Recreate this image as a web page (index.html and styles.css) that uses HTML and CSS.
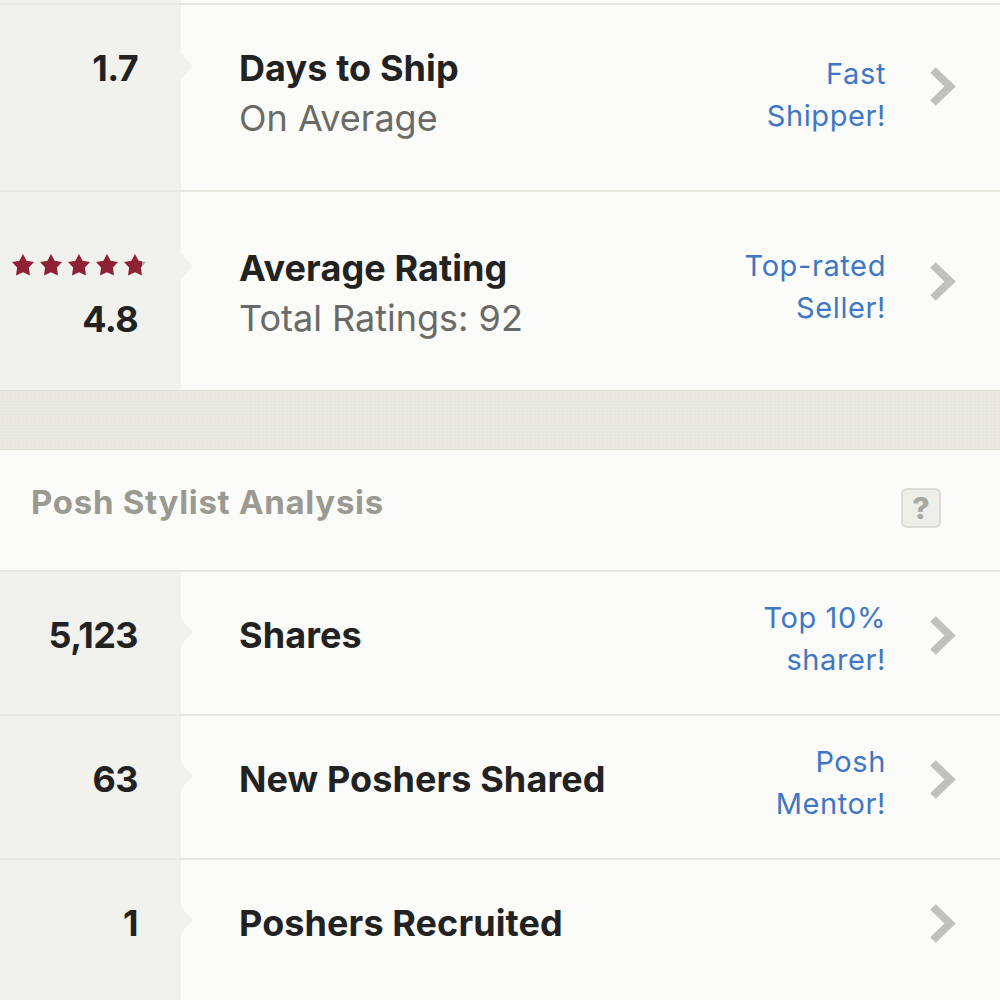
FILE: index.html
```html
<!DOCTYPE html>
<html>
    <head>
        <title>Posh Stats</title>
        <link rel="stylesheet" href="styles.css">
    </head>
    <body>
        <svg class="defs" width="0" height="0">
            <linearGradient id="part-star">
                <stop offset="0.82" stop-color="#8e2134"/>
                <stop offset="0.82" stop-color="#a9a9a3"/>
            </linearGradient>
            <symbol id="chevron" viewBox="0 0 26 39">
                <path d="M3 3 L20 19.5 L3 36" fill="none" stroke="#c0c1bc" stroke-width="8"/>
            </symbol>
            <symbol id="star" viewBox="0 0 22 22">
                <path d="M11 0 L14.6 6.8 L22 8 L16.9 13.6 L18 21.6 L11 18.2 L4 21.6 L5.1 13.6 L0 8 L7.4 6.8 Z"/>
            </symbol>
        </svg>

        <div class="top-sliver"></div>

        <div class="row row-ship">
            <div class="stat">1.7</div>
            <div class="info">
                <div class="title">Days to Ship</div>
                <div class="sub">On Average</div>
            </div>
            <a class="badge">Fast<br>Shipper!</a>
            <svg class="chevron"><use href="#chevron"/></svg>
        </div>

        <div class="row row-rating">
            <div class="stat">
                <div class="stars">
                    <svg class="star"><use href="#star"/></svg>
                    <svg class="star"><use href="#star"/></svg>
                    <svg class="star"><use href="#star"/></svg>
                    <svg class="star"><use href="#star"/></svg>
                    <svg class="star star-part"><use href="#star"/></svg>
                </div>
                4.8
            </div>
            <div class="info">
                <div class="title">Average Rating</div>
                <div class="sub">Total Ratings: 92</div>
            </div>
            <a class="badge">Top-rated<br>Seller!</a>
            <svg class="chevron"><use href="#chevron"/></svg>
        </div>

        <div class="band"></div>

        <div class="section-head">
            <h2>Posh Stylist Analysis</h2>
            <span class="help">?</span>
        </div>

        <div class="row row-small">
            <div class="stat">5,123</div>
            <div class="info"><div class="title">Shares</div></div>
            <a class="badge">Top 10%<br>sharer!</a>
            <svg class="chevron"><use href="#chevron"/></svg>
        </div>

        <div class="row row-small">
            <div class="stat">63</div>
            <div class="info"><div class="title">New Poshers Shared</div></div>
            <a class="badge">Posh<br>Mentor!</a>
            <svg class="chevron"><use href="#chevron"/></svg>
        </div>

        <div class="row row-small">
            <div class="stat">1</div>
            <div class="info"><div class="title">Poshers Recruited</div></div>
            <a class="badge"></a>
            <svg class="chevron"><use href="#chevron"/></svg>
        </div>
    </body>
</html>
```

FILE: styles.css
```css
html, body {
    margin: 0;
    padding: 0;
}
body {
    width: 1000px;
    height: 1000px;
    overflow: hidden;
    font-family: "Inter", "Lato", sans-serif;
    background-color: #fbfcf9;
    color: #222;
}
.defs {
    display: block;
    height: 0;
}
.top-sliver {
    height: 3px;
    background: linear-gradient(to right, #f1f2ed 181px, #fbfcf9 181px);
}
.row {
    display: grid;
    grid-template-columns: 181px 1fr auto 114px;
    box-sizing: border-box;
    border-top: 2px solid #e6e7e1;
    position: relative;
}
.row-ship {
    height: 187px;
}
.row-rating {
    height: 200px;
}
.row-small {
    height: 144px;
    align-items: center;
}
.stat {
    align-self: stretch;
    background-color: #f1f2ed;
    padding-right: 43px;
    text-align: right;
    font-size: 36px;
    font-weight: 700;
    letter-spacing: -0.6px;
    position: relative;
}
/* little notch pointing at the label */
.stat::after {
    content: "";
    position: absolute;
    left: 181px;
    margin-top: -13px;
    border-left: 12px solid #f1f2ed;
    border-top: 13px solid transparent;
    border-bottom: 13px solid transparent;
}
.row-small .stat {
    display: flex;
    align-items: center;
    justify-content: flex-end;
    padding-bottom: 16px;
}
.row-small .stat::after {
    top: 60px;
}
.row-ship .stat,
.row-rating .stat {
    line-height: 46px;
}
.row-ship .stat {
    padding-top: 40px;
}
.row-ship .stat::after {
    top: 61px;
}
.row-rating .stat {
    padding-top: 62px;
}
.row-rating .stat::after {
    top: 74px;
}
.stars {
    display: flex;
    gap: 6px;
    justify-content: flex-end;
    margin-right: -8px;
    height: 42px;
    align-items: flex-start;
}
.star {
    width: 22px;
    height: 22px;
    fill: #8e2134;
}
.star-part {
    fill: url(#part-star);
}
.info {
    padding-left: 58px;
}
.row-small .info {
    padding-bottom: 16px;
}
.row-ship .info {
    padding-top: 38px;
}
.row-rating .info {
    padding-top: 51px;
}
.title {
    font-size: 36px;
    font-weight: 700;
    line-height: 50px;
    letter-spacing: 0.1px;
    color: #222;
}
.sub {
    font-size: 36px;
    line-height: 50px;
    letter-spacing: 0;
    color: #6a6a67;
}
.badge {
    font-size: 29px;
    line-height: 42px;
    letter-spacing: 0.6px;
    color: #3f77c4;
    text-align: right;
}
.row-small .badge {
    padding-bottom: 8px;
}
.row-ship .badge {
    padding-top: 48px;
}
.row-rating .badge {
    padding-top: 53px;
}
.chevron {
    width: 26px;
    height: 39px;
    margin-left: 44px;
}
.row-small .chevron {
    margin-bottom: 16px;
}
.row-ship .chevron {
    margin-top: 62px;
}
.row-rating .chevron {
    margin-top: 70px;
}
.band {
    height: 60px;
    box-sizing: border-box;
    border-top: 1px solid #dfe0d9;
    border-bottom: 1px solid #dfe0d9;
    background-color: #e6e6df;
    background-image:
        repeating-linear-gradient(90deg, rgba(255, 255, 255, 0.1) 0 1px, transparent 1px 4px),
        repeating-linear-gradient(0deg, rgba(255, 255, 255, 0.1) 0 1px, transparent 1px 3px);
}
.section-head {
    height: 120px;
    display: flex;
    justify-content: space-between;
    align-items: center;
    padding: 0 59px 0 31px;
    box-sizing: border-box;
}
.section-head h2 {
    margin: 0 0 17px;
    font-size: 33px;
    font-weight: 700;
    letter-spacing: 0.7px;
    color: #9a9a92;
}
.help {
    width: 40px;
    height: 40px;
    box-sizing: border-box;
    border: 2px solid #dcdcd6;
    border-radius: 6px;
    background-color: #efefea;
    color: #a9a9a3;
    font-size: 30px;
    font-weight: 800;
    line-height: 36px;
    text-align: center;
    margin-top: -4px;
}
```
